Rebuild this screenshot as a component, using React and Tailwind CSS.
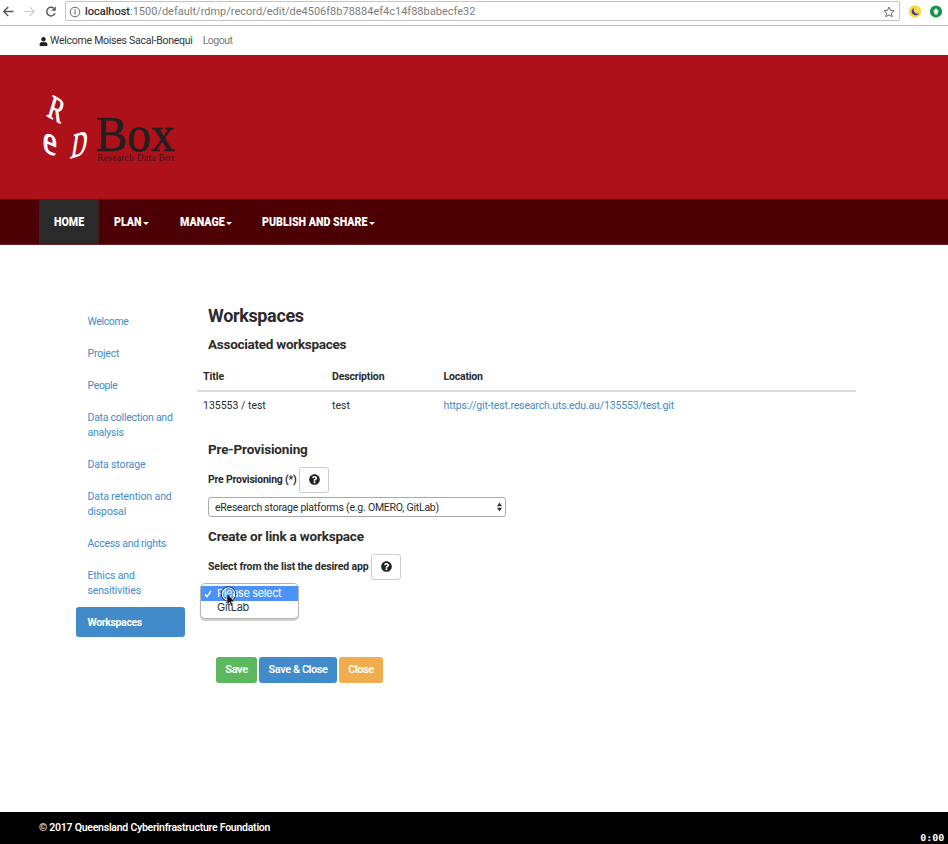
import React from "react";
import { FaUser, FaQuestionCircle } from "react-icons/fa";

const SIDEBAR = [
  { lines: ["Welcome"], track: "tracking-[-0.35px]" },
  { lines: ["Project"], track: "tracking-[-0.2px]" },
  { lines: ["People"], track: "tracking-[-0.35px]" },
  { lines: ["Data collection and", "analysis"], track: "tracking-[-0.25px]" },
  { lines: ["Data storage"], track: "tracking-[-0.15px]" },
  { lines: ["Data retention and", "disposal"], track: "tracking-[-0.1px]" },
  { lines: ["Access and rights"], track: "tracking-[-0.3px]" },
  { lines: ["Ethics and", "sensitivities"], track: "tracking-[-0.15px]" },
];

function BrowserBar() {
  return (
    <div className="flex h-[26px] shrink-0 items-start border-b border-[#b9b9b9] bg-white">
      <svg className="mt-1 ml-[3px] h-4 w-[56px] shrink-0" viewBox="0 0 56 16" fill="none">
        <path d="M10.5 7.5H1M5.2 3L.8 7.5 5.2 12" stroke="#5a5a5a" strokeWidth="1.4" />
        <path d="M21.500 7.500h9.500M26.800 3l4.400 4.500-4.400 4.500" stroke="#cfcfcf" strokeWidth="1.2" />
        <path d="M52 9.200A4.300 4.300 0 1 1 50.800 4.300" stroke="#5a5a5a" strokeWidth="1.500" />
        <path d="M52.800 2.200v4.600h-4.600z" fill="#5a5a5a" />
      </svg>
      <div className="ml-[6px] mt-px flex h-5 w-[835px] shrink-0 items-center rounded-[2px] border border-[#c4c4c4] pl-[3px] pr-[4px]">
        <svg className="mt-px size-3 shrink-0" viewBox="0 0 12 12" fill="none" stroke="#666">
          <circle cx="6" cy="6" r="4.800" strokeWidth="1" />
          <path d="M6 5.300v3.200M6 3.200v1.200" strokeWidth="1.200" />
        </svg>
        <span className="ml-[4px] mt-[2px] whitespace-nowrap text-[11px] leading-4 text-[#7d7d7d]">
          <span className="text-[#222] [-webkit-text-stroke:0.2px]">localhost</span>:1500/default/rdmp/record/edit/de4506f8b78884ef4c14f88babecfe32
        </span>
        <svg className="ml-auto mt-px size-3 shrink-0" viewBox="0 0 12 12" fill="none" stroke="#666" strokeWidth="1">
          <path d="M6 1l1.500 3.300 3.600.4-2.700 2.400.8 3.600L6 8.900l-3.200 1.800.8-3.600L.9 4.700l3.600-.4z" />
        </svg>
      </div>
      <svg className="ml-2 mt-[5px] h-[13px] w-[36px] shrink-0" viewBox="0 0 36 13">
        <circle cx="7" cy="6.500" r="6.200" fill="#f5d84e" />
        <path d="M6 2.700a4 4 0 1 0 5.200 5.500A4 4 0 0 1 6 2.700z" fill="#4a3a80" />
        <circle cx="28" cy="6.500" r="6.100" fill="#179347" />
        <path d="M28 3.300l3.200 3.300h-1.600v2.800h-3.200V6.600h-1.600z" fill="#fff" />
      </svg>
    </div>
  );
}

function Logo() {
  return (
    <svg className="h-[100px] w-[140px] overflow-visible" viewBox="40 80 140 100" fontFamily="'Liberation Serif', serif">
      <g fill="#fff" stroke="#fff" strokeWidth="0.800" fontSize="32">
        <text transform="matrix(.68 .38 -.3 .98 46 115.500)">R</text>
        <text transform="matrix(.98 .42 -.05 1.250 42.500 150.500)">e</text>
        <text transform="matrix(.66 -.2 -.18 1.120 70 158.500)">D</text>
      </g>
      <text x="96" y="151" fontSize="50" fill="#231f20" stroke="#231f20" strokeWidth="0.700" textLength="79" lengthAdjust="spacingAndGlyphs">Box</text>
      <text x="97" y="161" fontSize="9.500" fill="#431519" textLength="78" lengthAdjust="spacing">Research Data Box</text>
    </svg>
  );
}

function Caret() {
  return <span className="ml-[1px] mt-[3px] border-x-[3px] border-t-[3px] border-x-transparent border-t-white" />;
}

function NavBar() {
  return (
    <nav className="flex h-[46px] shrink-0 border-b border-[#6a2528] bg-[#4d0004] pl-[39px] text-[13px] font-black whitespace-nowrap text-white">
      <div className="flex w-[60px] items-center border-x border-[#3b2224] bg-[#2a2a2a] pl-[14px]"><span className="w-[30px] origin-left scale-x-[0.82]">HOME</span></div>
      <div className="ml-[15px] flex w-[66px] items-center"><span className="w-[28px] origin-left scale-x-[0.82]">PLAN</span><Caret /></div>
      <div className="flex w-[82px] items-center"><span className="w-[45px] origin-left scale-x-[0.82]">MANAGE</span><Caret /></div>
      <div className="flex items-center"><span className="w-[106px] origin-left scale-x-[0.82]">PUBLISH AND SHARE</span><Caret /></div>
    </nav>
  );
}

function HelpButton() {
  return (
    <button className="flex h-[26px] w-[30px] shrink-0 items-center justify-center rounded-[3px] border border-[#ccc] bg-white">
      <FaQuestionCircle className="size-[11px] -translate-y-px text-[#222]" />
    </button>
  );
}

function Sidebar() {
  return (
    <ul className="mt-[61px] flex w-[109px] shrink-0 flex-col gap-[2px] text-[10.500px] leading-[15px] text-[#428bca]">
      {SIDEBAR.map((item) => (
        <li key={item.lines[0]} className={"py-[7.500px] pl-[11.500px] whitespace-nowrap " + item.track}>
          {item.lines.map((l) => <div key={l}>{l}</div>)}
        </li>
      ))}
      <li className="rounded-[3px] bg-[#428bca] py-[7.500px] pl-[11.500px] font-bold tracking-[-0.35px] text-white">Workspaces</li>
    </ul>
  );
}

function AppMenu() {
  return (
    <div className="relative h-[22px] w-[80px] rounded-[3px] border border-[#8db4dc]">
      <div className="absolute -left-[9px] -top-[1px] h-[36px] w-[99px] rounded-[5px] border border-[#b4b4b4] bg-white pt-[2px] font-['Inter'] text-[11px] leading-[15px] shadow-[0_2px_1px_#cfcfcf]">
        <div className="flex h-[15px] items-center bg-[#4b92fb] text-white">
          <svg className="ml-[3px] mr-[5px] size-2" viewBox="0 0 8 8" fill="none" stroke="#fff" strokeWidth="1.400"><path d="M1 4.300l2 2.500L7 .8" /></svg>
          <span className="tracking-[-0.35px]">Please select</span>
        </div>
        <div className="h-[14px] pl-[16px] leading-[13px] tracking-[-0.25px] text-[#333]">GitLab</div>
        <svg className="absolute left-[19px] top-[1px] h-[24px] w-[18px]" viewBox="0 0 18 24">
          <circle cx="8.500" cy="9" r="6.300" fill="none" stroke="#fff" strokeWidth="1" />
          <circle cx="8.500" cy="9" r="7.300" fill="none" stroke="#26354c" strokeWidth="1" />
          <path d="M7 8.500v11l2.600-2.300 1.600 4 1.800-.8-1.700-3.700h3.400z" fill="#111" stroke="#fff" strokeWidth=".5" />
        </svg>
      </div>
    </div>
  );
}

function Workspaces() {
  return (
    <section className="ml-3 mt-[61px] w-[659px] text-[#2b2b2b]">
      <div className="pl-[11px]">
        <h1 className="h-5 whitespace-nowrap text-[18px] font-bold leading-5 tracking-[-0.35px]">Workspaces</h1>
        <h2 className="mt-[9px] h-[18px] whitespace-nowrap text-[13.500px] font-bold leading-[18px] tracking-[-0.27px]">Associated workspaces</h2>
      </div>
      <div className="mt-[11px] text-[10.500px]">
        <div className="flex h-[28px] items-center border-b-2 border-[#ddd] pl-[6px] font-bold">
          <span className="w-[129px]">Title</span>
          <span className="w-[111.500px] tracking-[-0.15px]">Description</span>
          <span className="tracking-[-0.2px]">Location</span>
        </div>
        <div className="flex h-[29px] items-center whitespace-nowrap pb-px pl-[6px]">
          <span className="w-[129px]">135553 / test</span>
          <span className="w-[111.500px]">test</span>
          <a className="tracking-[-0.15px] text-[#428bca]">https://git-test.research.uts.edu.au/135553/test.git</a>
        </div>
      </div>
      <div className="pl-[11px] text-[10.500px] font-bold">
        <h2 className="mt-[19px] h-[18px] text-[13.500px] leading-[18px] tracking-[-0.15px]">Pre-Provisioning</h2>
        <div className="mt-[9px] flex h-[26px] items-center"><span className="w-[91px] whitespace-nowrap tracking-[-0.2px]">Pre Provisioning (*)</span><HelpButton /></div>
        <div className="mt-[4px] flex h-5 w-[298px] items-center justify-between rounded-[3px] border border-[#a9a9a9] pl-[6px] pr-[3px] font-normal">
          <span className="whitespace-nowrap pt-[2px] tracking-[-0.23px]">eResearch storage platforms (e.g. OMERO, GitLab)</span>
          <svg className="h-[10px] w-[5px]" viewBox="0 0 5 10"><path d="M0 4.200L2.500.5 5 4.200zM0 5.800h5L2.500 9.500z" fill="#333" /></svg>
        </div>
        <h2 className="mt-[10px] h-[18px] text-[13.500px] leading-[18px] tracking-[-0.2px]">Create or link a workspace</h2>
        <div className="mt-[9px] flex h-[26px] items-center"><span className="w-[163px] whitespace-nowrap tracking-[-0.12px]">Select from the list the desired app</span><HelpButton /></div>
        <div className="mt-[3px] font-normal"><AppMenu /></div>
        <div className="ml-2 mt-[52px] flex h-[26px] text-[11px] font-semibold text-white">
          <button className="w-[41px] rounded-[3px] bg-[#5cb85c] pt-px tracking-[-0.4px]">Save</button>
          <button className="ml-[2px] w-[78px] rounded-[3px] bg-[#428bca] pt-px tracking-[-0.45px]">Save &amp; Close</button>
          <button className="ml-[2px] w-[44px] rounded-[3px] bg-[#f0ad4e] pt-px tracking-[-0.5px]">Close</button>
        </div>
      </div>
    </section>
  );
}

export default function App() {
  return (
    <div className="flex h-[844px] w-[948px] flex-col overflow-hidden bg-white font-['Roboto',sans-serif]">
      <BrowserBar />
      <div className="flex h-[29px] shrink-0 items-center whitespace-nowrap pl-[39px] pt-px text-[10.500px] text-[#333]">
        <FaUser className="mr-[2px] size-[9px] text-[#222]" />
        <span className="tracking-[-0.25px]">Welcome Moises Sacal-Bonequi</span>
        <span className="ml-[10px] tracking-[-0.5px] text-[#777]">Logout</span>
      </div>
      <header className="h-[144px] shrink-0 bg-[#af111a] pl-10 pt-[25px]"><Logo /></header>
      <NavBar />
      <main className="flex h-[567px] shrink-0 pl-[76px]">
        <Sidebar />
        <Workspaces />
      </main>
      <footer className="flex h-8 shrink-0 justify-between bg-black pl-[39px] pr-[4px] text-white">
        <span className="whitespace-nowrap text-[10.500px] font-semibold leading-[31px] tracking-[-0.25px]">© 2017 Queensland Cyberinfrastructure Foundation</span>
        <span className="mt-[21px] origin-right scale-x-125 font-['DejaVu_Sans_Mono'] text-[8px] font-bold leading-3">0:00</span>
      </footer>
    </div>
  );
}
